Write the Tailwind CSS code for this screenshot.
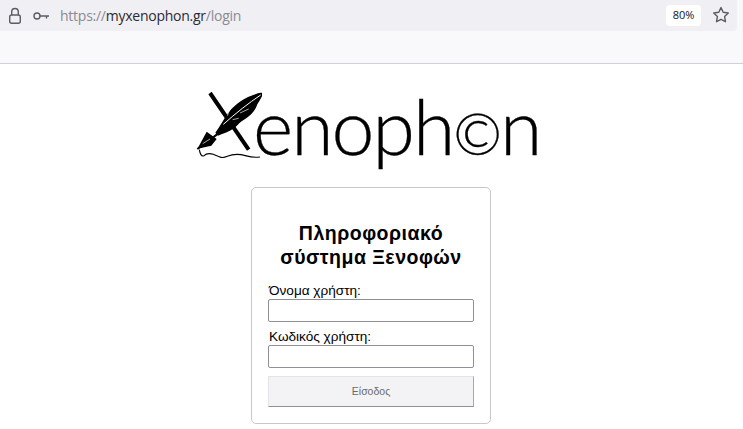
<!DOCTYPE html>
<html lang="el">
<head>
    <meta charset="UTF-8">
    <meta name="viewport" content="width=device-width, initial-scale=1.0">
    <title>Xenophon - Login</title>
    <script src="https://cdn.jsdelivr.net/npm/@tailwindcss/browser@4"></script>
</head>
<body class="bg-white h-[429px] overflow-hidden font-['Liberation_Sans',sans-serif]">
    <!-- browser chrome -->
    <header class="bg-[#f9f9fb] border-b border-[#cfcfd8] h-[64px]">
        <div class="flex items-center h-[31px] w-[737px] bg-[#f0f0f4] rounded-br-[4px]">
            <svg class="ml-[7px]" width="16" height="18" viewBox="0 0 16 18" fill="none" stroke="#5b5b66" stroke-width="1.4">
                <rect x="2.7" y="8" width="10.6" height="8.3" rx="2"/>
                <path d="M4.7 8V4.8a3.3 3.3 0 0 1 6.6 0V8"/>
            </svg>
            <svg class="ml-[10px]" width="17" height="10" viewBox="0 0 17 10" fill="none" stroke="#5b5b66" stroke-width="1.4">
                <circle cx="4" cy="5" r="3"/>
                <path d="M7 5h9M13.5 5v2.5"/>
            </svg>
            <p class="ml-[10px] text-[14px] font-['Open_Sans',sans-serif] text-[#8a8a93] tracking-[-0.25px]">https://<span class="text-[#2b2a33]">myxenophon.gr</span>/login</p>
            <span class="ml-auto mr-[36px] w-[35px] h-[21px] bg-white rounded-[4px] flex items-center justify-center text-[11px] font-['Open_Sans',sans-serif] text-[#15141a]">80%</span>
        </div>
        <svg class="absolute left-[712px] top-[6px]" width="18" height="18" viewBox="0 0 18 18" fill="none" stroke="#5b5b66" stroke-width="1.4" stroke-linejoin="round">
            <path d="M9 1.6l2.2 4.7 5.1.7-3.7 3.6.9 5.1L9 13.3l-4.5 2.4.9-5.1L1.7 7l5.1-.7z"/>
        </svg>
    </header>

    <main class="flex flex-col items-center pr-[1px]">
        <!-- logo: quill and X arm are drawn, the rest of the name is text -->
        <div class="flex items-start w-[360px] h-[123px] -translate-x-[8px] pt-[21px]">
            <svg class="shrink-0 ml-[7px]" width="72" height="90" viewBox="0 0 216 270">
                <path d="M60 24L176 194" stroke="#000" stroke-width="12" fill="none"/>
                <path d="M222 22C180 27 140 52 116 82C100 103 92 122 76 143L84 152C100 146 118 140 132 130C144 120 148 112 162 104C180 92 196 78 202 58C210 46 216 34 222 22Z" fill="#000"/>
                <path d="M212 30C176 54 138 84 100 118" stroke="#fff" stroke-width="3" fill="none"/>
                <path d="M176 72L150 84M146 100L128 104M124 62L112 92" stroke="#fff" stroke-width="2" fill="none"/>
                <path d="M84 146L50 172L22 192" stroke="#000" stroke-width="6" fill="none"/>
                <path d="M50 140L80 162L64 182L30 190L22 192Z" fill="#000"/>
                <path d="M38 176L60 162" stroke="#fff" stroke-width="2" fill="none"/>
                <path d="M28 194C30 206 34 216 42 212C50 204 58 204 70 208C84 214 94 222 112 214C126 208 146 206 166 212C180 216 196 218 210 216" stroke="#000" stroke-width="3.4" fill="none"/>
            </svg>
            <p class="-ml-[9px] mt-[-5px] text-[77px] leading-[90px] font-light font-['Lato',sans-serif] text-black [-webkit-text-stroke:0.3px_black] tracking-[-2px] whitespace-nowrap">enoph<span class="text-[58px]">©</span>n</p>
        </div>

        <form class="w-[240px] h-[237px] border border-[#c8c8c8] rounded-[5px] px-[16px] pt-[33px]">
            <h1 class="text-[19.5px] leading-[24px] font-bold text-black text-center tracking-[0.5px]">Πληροφοριακό σύστημα Ξενοφών</h1>
            <label class="block mt-[14px] pl-[1px] text-[13.6px] leading-[16px] text-black">Όνομα χρήστη:</label>
            <input type="text" class="block w-[206px] h-[23px] border border-[#8f8f9d] rounded-[2px] bg-white">
            <label class="block mt-[7px] pl-[1px] text-[13.6px] leading-[16px] text-black">Κωδικός χρήστη:</label>
            <input type="password" class="block w-[206px] h-[23px] border border-[#8f8f9d] rounded-[2px] bg-white">
            <button type="button" class="block mt-[8px] w-[206px] h-[31px] bg-[#f3f3f6] border border-[#e4e4e8] border-b-[#8f8f9d] border-r-[#a8a8b0] text-[10.5px] text-[#6b6b6b]">Είσοδος</button>
        </form>
    </main>
</body>
</html>
